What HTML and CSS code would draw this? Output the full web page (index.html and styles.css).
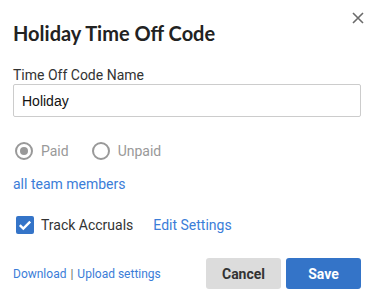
FILE: index.html
```html
<!DOCTYPE html>
<html lang="en">
<head>
  <meta charset="UTF-8">
  <meta name="viewport" content="width=device-width, initial-scale=1">
  <title>Holiday Time Off Code</title>
  <link rel="stylesheet" href="styles.css">
</head>
<body>
  <div class="dialog">
    <button class="close" aria-label="Close">
      <svg width="12" height="12" viewBox="0 0 12 12">
        <path d="M1 1L11 11M11 1L1 11" stroke="#6b6b6b" stroke-width="1.6" fill="none"/>
      </svg>
    </button>
    <h2 class="title">Holiday Time Off Code</h2>

    <label class="field-label" for="codeName">Time Off Code Name</label>
    <input id="codeName" class="text-input" type="text" value="Holiday">

    <div class="radio-row">
      <label class="radio checked"><span class="dot"></span>Paid</label>
      <label class="radio"><span class="dot"></span>Unpaid</label>
    </div>

    <a class="link members" href="#">all team members</a>

    <div class="check-row">
      <span class="checkbox">
        <svg width="18" height="18" viewBox="0 0 18 18">
          <path d="M3.8 9.2L7.3 12.6L14.2 5.6" stroke="#fff" stroke-width="2.4" fill="none"/>
        </svg>
      </span>
      <span class="check-text">Track Accruals</span>
      <a class="link" href="#">Edit Settings</a>
    </div>

    <div class="footer">
      <div class="footer-links">
        <a class="link" href="#">Download</a><span class="sep">|</span><a class="link" href="#">Upload settings</a>
      </div>
      <div class="actions">
        <button class="btn cancel">Cancel</button>
        <button class="btn save">Save</button>
      </div>
    </div>
  </div>
</body>
</html>
```

FILE: styles.css
```css
* {
  margin: 0;
  padding: 0;
  box-sizing: border-box;
}

body {
  background: #fff;
  font-family: Roboto, "Liberation Sans", sans-serif;
  color: #333;
}

.dialog {
  position: relative;
  width: 376px;
  height: 300px;
  padding: 20px 15px 0 13px;
}

.close {
  position: absolute;
  top: 12px;
  right: 12px;
  width: 12px;
  height: 12px;
  border: none;
  background: none;
  cursor: pointer;
}

.close svg {
  display: block;
}

.title {
  font-family: Lato, "Open Sans", sans-serif;
  font-weight: 700;
  font-size: 20px;
  line-height: 26px;
  color: #222;
  margin-bottom: 20px;
}

.field-label {
  display: block;
  font-size: 14px;
  line-height: 18px;
  color: #333;
}

.text-input {
  display: block;
  width: 100%;
  height: 33px;
  border: 1px solid #ccc;
  border-radius: 2px;
  padding: 0 8px;
  font-family: "Liberation Sans", Arial, sans-serif;
  font-size: 14px;
  color: #111;
  outline: none;
}

.radio-row {
  display: flex;
  gap: 23px;
  margin-top: 24px;
  height: 20px;
  align-items: center;
  padding-left: 2px;
}

.radio {
  display: flex;
  align-items: center;
  gap: 8px;
  font-size: 14px;
  color: #999;
}

.dot {
  width: 18px;
  height: 18px;
  border: 2px solid #999;
  border-radius: 50%;
  display: flex;
  align-items: center;
  justify-content: center;
}

.radio.checked .dot::after {
  content: "";
  width: 8px;
  height: 8px;
  border-radius: 50%;
  background: #999;
}

.link {
  color: #3b7dd8;
  text-decoration: none;
  font-size: 14px;
}

.members {
  display: block;
  margin-top: 14px;
  line-height: 18px;
}

.check-row {
  display: flex;
  align-items: center;
  margin-top: 22px;
  margin-left: 3px;
  height: 20px;
}

.checkbox {
  width: 18px;
  height: 18px;
  background: #3474c8;
  border-radius: 2px;
  margin-right: 7px;
}

.checkbox svg {
  display: block;
}

.check-text {
  font-size: 14px;
  color: #333;
  margin-right: 20px;
}

.footer {
  display: flex;
  align-items: center;
  justify-content: space-between;
  margin-top: 23px;
}

.footer-links {
  font-size: 12px;
}

.footer-links .link {
  font-size: 12px;
}

.sep {
  color: #666;
  margin: 0 4px;
}

.actions {
  display: flex;
  gap: 5px;
}

.btn {
  width: 75px;
  height: 31px;
  border: none;
  border-radius: 3px;
  font-family: Roboto, "Liberation Sans", sans-serif;
  font-weight: 700;
  font-size: 14px;
  cursor: pointer;
}

.cancel {
  background: #dcdcdc;
  color: #333;
}

.save {
  background: #3474c8;
  color: #fff;
}
```
